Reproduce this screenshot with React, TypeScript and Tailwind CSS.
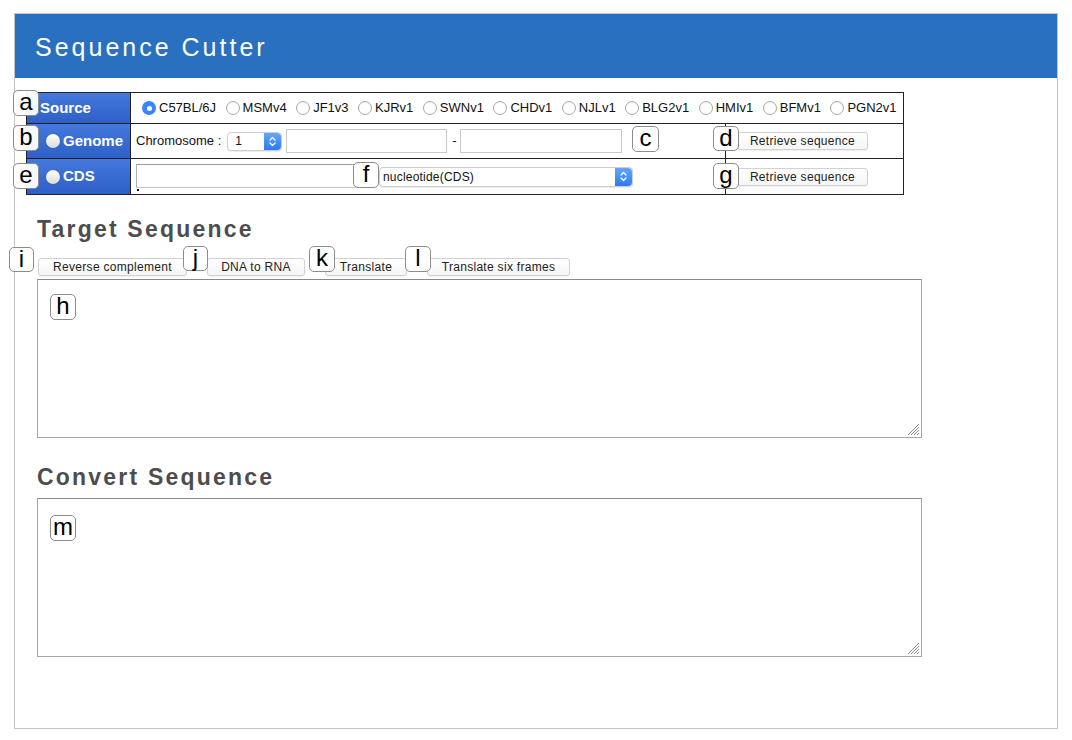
import React from "react";

const Radio = ({ checked }: { checked?: boolean }) =>
  checked ? (
    <span className="w-[14px] h-[14px] rounded-full bg-[#3b86f7] flex items-center justify-center shrink-0">
      <span className="w-[5px] h-[5px] rounded-full bg-white" />
    </span>
  ) : (
    <span className="w-[14px] h-[14px] rounded-full border border-[#a8a8a8] bg-white shrink-0 shadow-[inset_0_1px_1px_rgba(0,0,0,0.05)]" />
  );

const WhiteRadio = () => (
  <span className="w-[14px] h-[14px] rounded-full bg-gradient-to-b from-white to-[#dcdcdc] shrink-0 shadow-[0_0_1px_rgba(0,0,0,0.4)]" />
);

const Stepper = () => (
  <span className="w-[17px] self-stretch rounded-r-[4px] bg-gradient-to-b from-[#63a6fa] to-[#2d7bf1] flex items-center justify-center shrink-0">
    <svg width="7" height="11" viewBox="0 0 7 11" fill="none" stroke="white" strokeWidth="1.3" strokeLinecap="round" strokeLinejoin="round">
      <path d="M1 4 L3.5 1.5 L6 4" />
      <path d="M1 7 L3.5 9.5 L6 7" />
    </svg>
  </span>
);

const Btn = ({ children, w }: { children: React.ReactNode; w: string }) => (
  <div
    className={`${w} h-[18px] flex items-center justify-center rounded-[3px] border border-[#d2d2d2] bg-gradient-to-b from-white to-[#f6f6f6] shadow-[0_1px_0_rgba(0,0,0,0.06)] text-[12px] tracking-[0.3px] text-[#222] shrink-0`}
  >
    {children}
  </div>
);

const Grip = () => (
  <svg className="absolute right-[1px] bottom-[1px]" width="14" height="14" viewBox="0 0 14 14" stroke="#8a8a8a" strokeWidth="1">
    <path d="M13 2 L2 13" />
    <path d="M13 5 L5 13" />
    <path d="M13 8 L8 13" />
    <path d="M13 11 L11 13" />
  </svg>
);

const labelCls =
  "absolute flex items-center justify-center bg-white/95 border border-[#8c8c8c] rounded-[5px] text-[24px] leading-none text-black pb-[2px]";

const sources = ["C57BL/6J", "MSMv4", "JF1v3", "KJRv1", "SWNv1", "CHDv1", "NJLv1", "BLG2v1", "HMIv1", "BFMv1", "PGN2v1"];

export default function App() {
  return (
    <div className="relative w-[1072px] h-[740px] bg-white pt-[13px] font-['Liberation_Sans',Arial,sans-serif] text-[#111] overflow-hidden">
      <div className="ml-[14px] w-[1044px] h-[716px] border border-[#c4c4c4] flex flex-col">
        {/* header */}
        <div className="h-[64px] bg-[#2970c0] flex items-center pl-[20px]">
          <span className="text-white text-[25px] tracking-[3px] leading-none mt-[2px]">Sequence Cutter</span>
        </div>

        {/* table */}
        <div className="mt-[14px] ml-[11px] w-[878px] border border-[#222] flex flex-col">
          {/* source */}
          <div className="flex h-[31px] border-b border-[#222]">
            <div className="w-[104px] border-r border-[#222] bg-gradient-to-b from-[#4479de] to-[#2e5fc6] flex items-center pl-[13px]">
              <span className="text-white font-bold text-[15px]">Source</span>
            </div>
            <div className="flex-1 flex items-center pl-[11px] gap-[9.5px] text-[13px]">
              {sources.map((s, i) => (
                <span key={s} className="flex items-center gap-[3px]">
                  <Radio checked={i === 0} />
                  <span>{s}</span>
                </span>
              ))}
            </div>
          </div>
          {/* genome */}
          <div className="flex h-[35px] border-b border-[#222]">
            <div className="w-[104px] border-r border-[#222] bg-gradient-to-b from-[#4479de] to-[#2e5fc6] flex items-center pl-[19px] gap-[3px]">
              <WhiteRadio />
              <span className="text-white font-bold text-[15px]">Genome</span>
            </div>
            <div className="w-[595px] border-r border-[#222] flex items-center pl-[5px] text-[13px]">
              <span>Chromosome :</span>
              <div className="ml-[6px] w-[55px] h-[19px] flex items-stretch rounded-[4px] border border-[#cdcdcd] bg-white shadow-[0_1px_1px_rgba(0,0,0,0.08)]">
                <span className="flex-1 flex items-center pl-[7px] text-[12px]">1</span>
                <Stepper />
              </div>
              <div className="ml-[4px] w-[161px] h-[24px] border border-[#c8c8c8] bg-white" />
              <span className="ml-[5px] w-[8px]">-</span>
              <div className="w-[162px] h-[24px] border border-[#c8c8c8] bg-white" />
            </div>
            <div className="flex-1 flex items-center pl-[11px]">
              <Btn w="w-[131px]">Retrieve sequence</Btn>
            </div>
          </div>
          {/* cds */}
          <div className="flex h-[35px]">
            <div className="w-[104px] border-r border-[#222] bg-gradient-to-b from-[#4479de] to-[#2e5fc6] flex items-center pl-[19px] gap-[3px]">
              <WhiteRadio />
              <span className="text-white font-bold text-[15px]">CDS</span>
            </div>
            <div className="w-[595px] border-r border-[#222] flex items-center pl-[5px]">
              <div className="flex flex-col self-start pt-[5px]">
                <div className="w-[220px] h-[24px] border border-[#c4c4c4] border-t-[#9a9a9a] border-l-[#b0b0b0] bg-white" />
                <div className="w-[2px] h-[2px] bg-black mt-[1px] ml-[1px]" />
              </div>
              <div className="ml-[23px] w-[254px] h-[20px] flex items-stretch rounded-[4px] border border-[#cdcdcd] bg-white shadow-[0_1px_1px_rgba(0,0,0,0.08)]">
                <span className="flex-1 flex items-center pl-[3px] text-[12px] tracking-[0.2px]">nucleotide(CDS)</span>
                <Stepper />
              </div>
            </div>
            <div className="flex-1 flex items-center pl-[11px]">
              <Btn w="w-[131px]">Retrieve sequence</Btn>
            </div>
          </div>
        </div>

        {/* target */}
        <div className="ml-[22px] mt-[22px] h-[24px] leading-[24px] text-[23px] font-bold tracking-[2.2px] text-[#4d4d4d]">
          Target Sequence
        </div>
        <div className="ml-[23px] mt-[17px] flex gap-[20px]">
          <Btn w="w-[149px]">Reverse complement</Btn>
          <Btn w="w-[98px]">DNA to RNA</Btn>
          <Btn w="w-[82px]">Translate</Btn>
          <Btn w="w-[143px]">Translate six frames</Btn>
        </div>
        <div className="ml-[22px] mt-[3px] relative w-[885px] h-[159px] border border-[#a6a6a6] border-t-[#8a8a8a] bg-white">
          <Grip />
        </div>

        {/* convert */}
        <div className="ml-[22px] mt-[27px] h-[24px] leading-[24px] text-[23px] font-bold tracking-[2.2px] text-[#4d4d4d]">
          Convert Sequence
        </div>
        <div className="ml-[22px] mt-[9px] relative w-[885px] h-[159px] border border-[#a6a6a6] border-t-[#8a8a8a] bg-white">
          <Grip />
        </div>
      </div>

      {/* annotation labels */}
      <div className={`${labelCls} left-[13px] top-[90px] w-[26px] h-[26px]`}>a</div>
      <div className={`${labelCls} left-[13px] top-[125px] w-[26px] h-[26px]`}>b</div>
      <div className={`${labelCls} left-[632px] top-[126px] w-[27px] h-[26px]`}>c</div>
      <div className={`${labelCls} left-[713px] top-[126px] w-[26px] h-[25px]`}>d</div>
      <div className={`${labelCls} left-[13px] top-[163px] w-[26px] h-[26px]`}>e</div>
      <div className={`${labelCls} left-[353px] top-[162px] w-[26px] h-[26px]`}>f</div>
      <div className={`${labelCls} left-[713px] top-[163px] w-[26px] h-[26px]`}>g</div>
      <div className={`${labelCls} left-[50px] top-[294px] w-[26px] h-[26px]`}>h</div>
      <div className={`${labelCls} left-[9px] top-[247px] w-[25px] h-[25px]`}>i</div>
      <div className={`${labelCls} left-[183px] top-[246px] w-[25px] h-[25px]`}>j</div>
      <div className={`${labelCls} left-[309px] top-[246px] w-[26px] h-[26px]`}>k</div>
      <div className={`${labelCls} left-[405px] top-[246px] w-[26px] h-[26px]`}>l</div>
      <div className={`${labelCls} left-[50px] top-[515px] w-[26px] h-[26px]`}>m</div>
    </div>
  );
}
